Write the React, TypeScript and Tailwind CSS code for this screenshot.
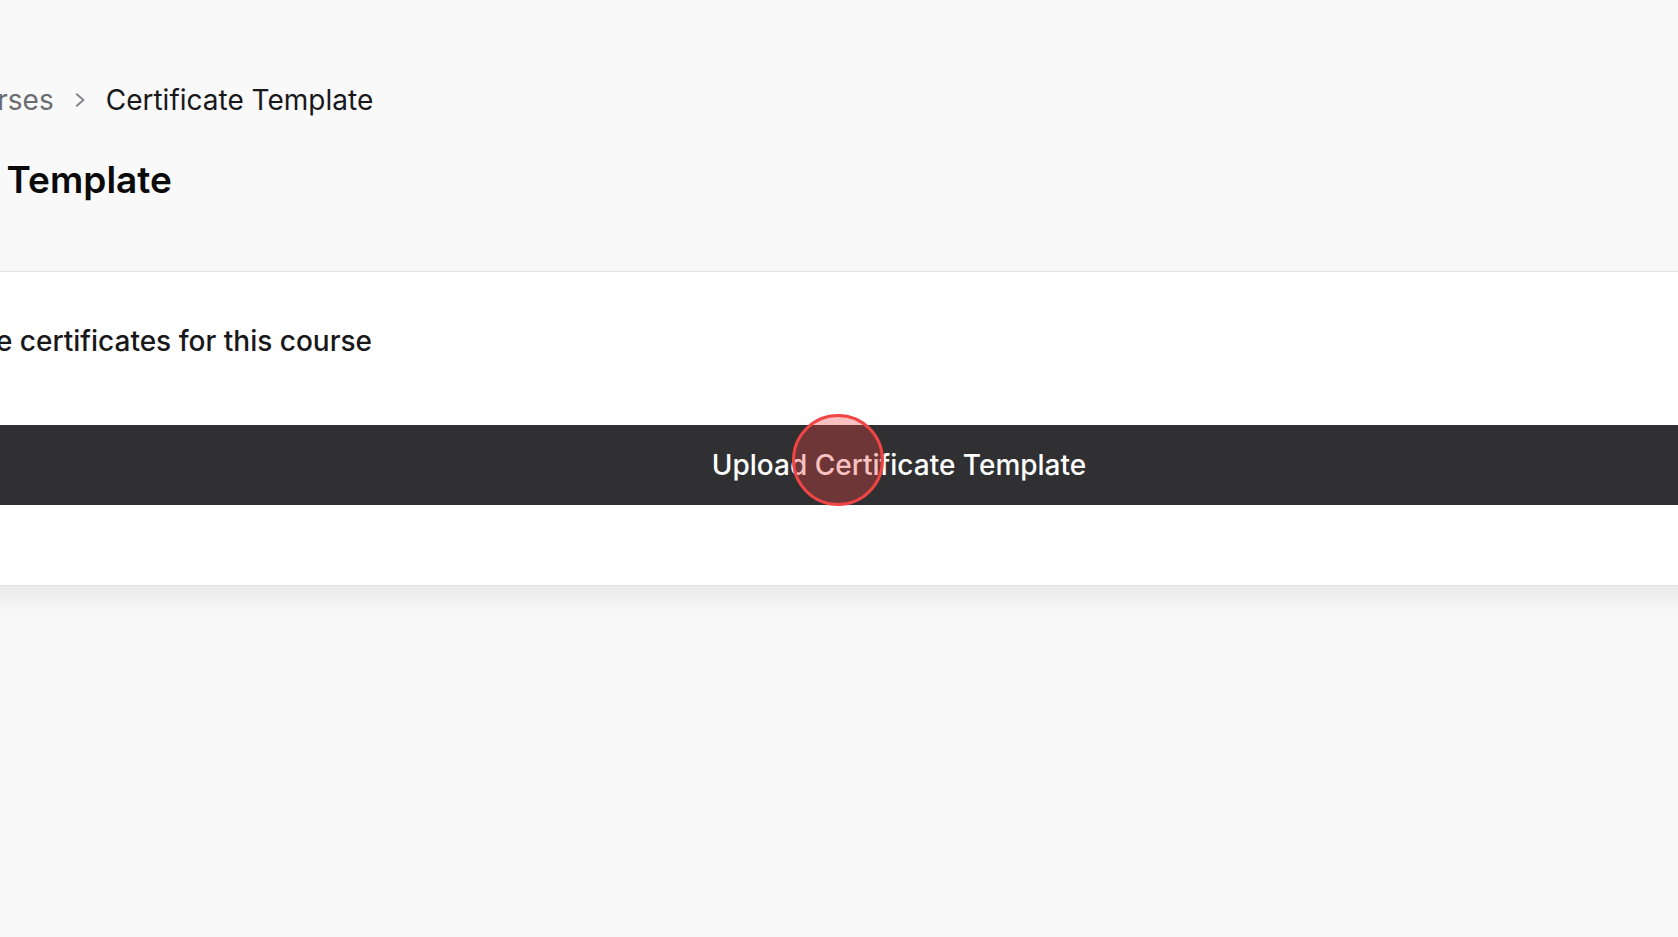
import React from "react";

function Chevron() {
  return (
    <svg width="10" height="14" viewBox="0 0 10 14" fill="none" className="shrink-0">
      <path d="M1.8 1.2L8.4 7l-6.6 5.8" stroke="#85858b" strokeWidth="2" strokeLinecap="round" strokeLinejoin="round" />
    </svg>
  );
}

export default function App() {
  return (
    <div
      className="relative h-[937px] w-full overflow-hidden bg-[#f9f9f9]"
      style={{ fontFamily: "Inter, 'Noto Sans', sans-serif" }}
    >
      <div className="ml-[-185px] w-[2168px]">
        <div className="pt-[80px] pb-[67px]">
          <nav className="ml-[-2px] flex items-center gap-[21px] text-[28px] leading-[40px]">
            <span className="text-[#6b6b70]">Home</span>
            <Chevron />
            <span className="text-[#6b6b70]">Courses</span>
            <Chevron />
            <span className="text-[#18181b]">Certificate Template</span>
          </nav>
          <h1 className="ml-[-7px] mt-[36px] text-[37px] font-semibold leading-[48px] text-[#0a0a0a]">
            Certificate Template
          </h1>
        </div>
        <div className="border-y border-[#e2e2e2] bg-white pt-[49px] pb-[80px] shadow-[0_12px_28px_rgba(0,0,0,0.07)]">
          <p className="ml-[-206px] text-[28px] font-medium leading-[40px] text-[#18181b]">
            Upload a template to generate certificates for this course
          </p>
          <button className="mt-[64px] flex h-[80px] w-full items-center justify-center bg-[#303032] text-[28px] font-medium text-white">
            Upload Certificate Template
          </button>
        </div>
      </div>
      <div className="pointer-events-none absolute left-[792px] top-[414px] h-[92px] w-[92px] rounded-full border-[3px] border-[#f04545] bg-[rgba(239,68,68,0.33)]" />
    </div>
  );
}
